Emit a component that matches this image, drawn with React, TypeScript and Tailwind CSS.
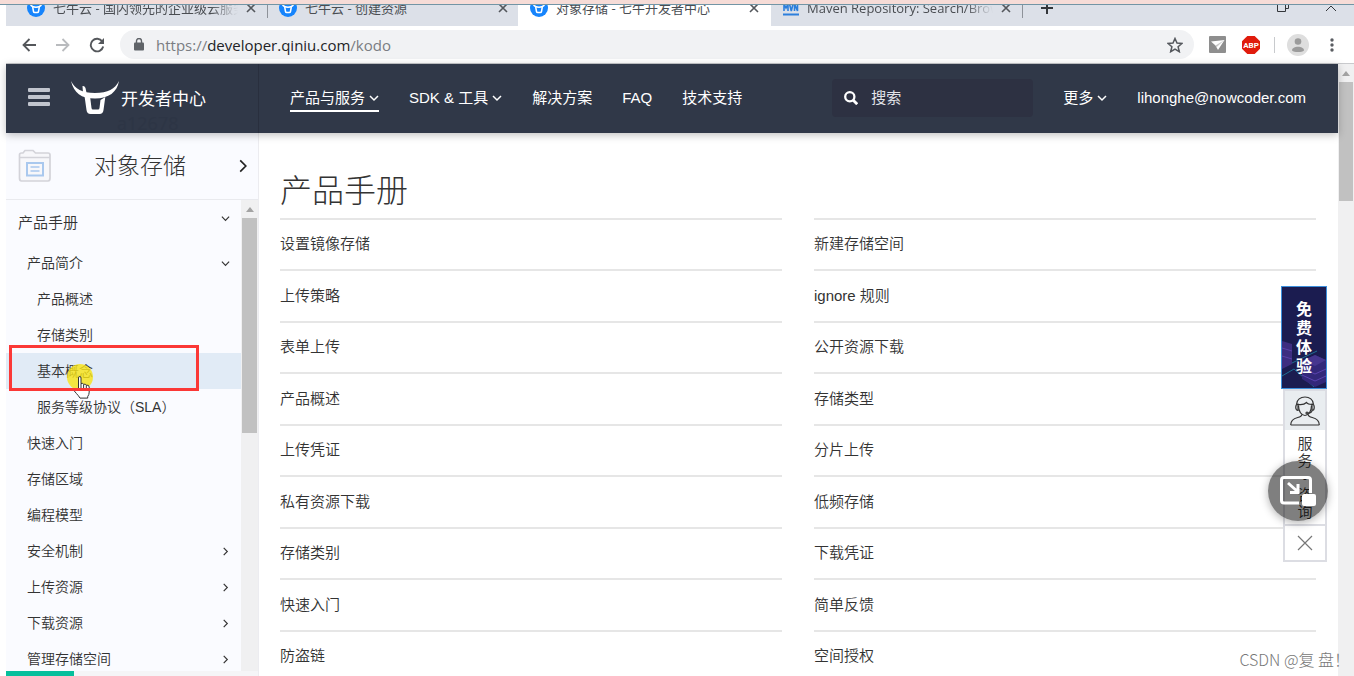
import type { ReactNode } from 'react';

type Tab = {
  title: string;
  icon: 'qiniu' | 'mvn';
  className: string;
  fade?: boolean;
  divider?: boolean;
};

type NavItem = {
  label: string;
  active?: boolean;
  menu?: boolean;
};

type MenuItem = {
  label: string;
  level: 1 | 2;
  state?: 'open' | 'closed';
  active?: boolean;
};

const tabs: Tab[] = [
  { title: '七牛云 - 国内领先的企业级云服务商', icon: 'qiniu', className: 'w-[262px] pl-[21px] pr-3 bg-[#dce0e8]', fade: true, divider: true },
  { title: '七牛云 - 创建资源', icon: 'qiniu', className: 'w-[250px] pl-[11px] pr-[10px] bg-[#dce0e8] rounded-br-lg' },
  { title: '对象存储 - 七牛开发者中心', icon: 'qiniu', className: 'w-[253px] pl-3 pr-3 bg-white' },
  { title: 'Maven Repository: Search/Browse', icon: 'mvn', className: 'w-[252px] pl-3 pr-3 bg-[#dce0e8] rounded-bl-lg', fade: true, divider: true },
];

const navItems: NavItem[] = [
  { label: '产品与服务', active: true, menu: true },
  { label: 'SDK & 工具', menu: true },
  { label: '解决方案' },
  { label: 'FAQ' },
  { label: '技术支持' },
];

const menuItems: MenuItem[] = [
  { label: '产品简介', level: 1, state: 'open' },
  { label: '产品概述', level: 2 },
  { label: '存储类别', level: 2 },
  { label: '基本概念', level: 2, active: true },
  { label: '服务等级协议（SLA）', level: 2 },
  { label: '快速入门', level: 1 },
  { label: '存储区域', level: 1 },
  { label: '编程模型', level: 1 },
  { label: '安全机制', level: 1, state: 'closed' },
  { label: '上传资源', level: 1, state: 'closed' },
  { label: '下载资源', level: 1, state: 'closed' },
  { label: '管理存储空间', level: 1, state: 'closed' },
];

const leftDocs = ['设置镜像存储', '上传策略', '表单上传', '产品概述', '上传凭证', '私有资源下载', '存储类别', '快速入门', '防盗链'];
const rightDocs = ['新建存储空间', 'ignore 规则', '公开资源下载', '存储类型', '分片上传', '低频存储', '下载凭证', '简单反馈', '空间授权'];

function Chevron({ dir, className }: { dir: 'down' | 'right'; className: string }) {
  return (
    <svg viewBox="0 0 10 10" className={className} fill="none" stroke="currentColor" aria-hidden="true">
      <path d={dir === 'down' ? 'M1 3l4 4 4-4' : 'M3 1l4 4-4 4'} />
    </svg>
  );
}

function QiniuIcon() {
  return (
    <svg viewBox="0 0 18 18" className="size-[18px] shrink-0" aria-hidden="true">
      <circle cx="9" cy="9" r="9" fill="#1684fc" />
      <path d="M3.5 5.500c1.500 3.600 9.500 3.600 11 0" fill="none" stroke="#fff" strokeWidth="1.500" />
      <path d="M5.700 8l.8 4.500q.2 1 1.200 1h2.600q1 0 1.200-1l.8-4.500" fill="none" stroke="#fff" strokeWidth="1.500" />
    </svg>
  );
}

function MvnIcon() {
  return (
    <svg viewBox="0 0 16 18" className="w-4 h-[18px] shrink-0" fill="none" stroke="#2d7fdc" aria-hidden="true">
      <path d="M1 12V5l2 4 2-4v7M6.500 5l1.800 7L10 5M11.500 12V5l3 7V5" strokeWidth="1.600" />
      <path d="M0 15.500h16" strokeWidth="2" />
    </svg>
  );
}

function BrowserTab({ tab }: { tab: Tab }) {
  return (
    <div className={`relative flex h-9 shrink-0 items-center ${tab.className}`}>
      {tab.icon === 'qiniu' ? <QiniuIcon /> : <MvnIcon />}
      <a
        href="#"
        className={`ml-2 min-w-0 flex-1 overflow-hidden whitespace-nowrap text-[13px] leading-5 text-[#4a4d52] ${
          tab.fade ? '[mask-image:linear-gradient(to_right,#000_85%,transparent)]' : ''
        }`}
      >
        {tab.title}
      </a>
      <button type="button" aria-label={`关闭 ${tab.title}`} className="ml-2 shrink-0 text-[#54575c]">
        <svg viewBox="0 0 10 10" className="size-[10px]" stroke="currentColor" strokeWidth="1.600">
          <path d="M1 1l8 8M9 1l-8 8" />
        </svg>
      </button>
      {tab.divider && <span className="absolute right-0 bottom-2 h-5 w-px bg-[#8e9299]" />}
    </div>
  );
}

function TabStrip() {
  return (
    <div className="ml-[6px] flex h-[21px] shrink-0 items-end overflow-hidden bg-[#dce0e8] font-['Open_Sans','Noto_Sans_CJK_SC',sans-serif]">
      {tabs.map((tab) => (
        <BrowserTab key={tab.title} tab={tab} />
      ))}
      <button type="button" aria-label="新标签页" className="mb-3 ml-[18px] text-[#33363a]">
        <svg viewBox="0 0 12 12" className="size-3" stroke="currentColor" strokeWidth="2">
          <path d="M6 0v12M0 6h12" />
        </svg>
      </button>
      <div className="mr-[17px] mb-[14px] ml-auto flex items-end gap-9 text-[#33363a]">
        <svg viewBox="0 0 12 12" className="size-3" fill="none" stroke="currentColor" aria-hidden="true">
          <path d="M.5 3.500h8v8h-8zM3 3V.500h8.500v8H9" />
        </svg>
        <svg viewBox="0 0 12 12" className="size-3" fill="none" stroke="currentColor" aria-hidden="true">
          <path d="M1 11l5-5 5 5" />
        </svg>
      </div>
    </div>
  );
}

function IconButton({ label, className, children }: { label: string; className: string; children: ReactNode }) {
  return (
    <button type="button" aria-label={label} className={`shrink-0 ${className}`}>
      {children}
    </button>
  );
}

function Toolbar() {
  return (
    <div className="ml-[6px] flex h-[38px] shrink-0 items-center border-b border-[#c9cacd] bg-white pr-4 pl-4">
      <IconButton label="后退" className="text-[#54575b]">
        <svg viewBox="0 0 14 14" className="size-[14px]" fill="none" stroke="currentColor" strokeWidth="1.800">
          <path d="M14 7H1.500M7.500 1l-6 6 6 6" />
        </svg>
      </IconButton>
      <IconButton label="前进" className="ml-5 text-[#b9bbbe]">
        <svg viewBox="0 0 14 14" className="size-[14px]" fill="none" stroke="currentColor" strokeWidth="1.800">
          <path d="M0 7h12.500M6.500 1l6 6-6 6" />
        </svg>
      </IconButton>
      <IconButton label="重新加载" className="ml-[19px] text-[#54575b]">
        <svg viewBox="0 0 16 16" className="size-4" fill="none" stroke="currentColor" strokeWidth="1.900">
          <path d="M13.300 4.500A6.300 6.300 0 1 0 14.200 9.500" />
          <path d="M15 1v6H9z" fill="currentColor" stroke="none" />
        </svg>
      </IconButton>
      <div className="ml-[15px] flex h-[29px] min-w-0 flex-1 items-center rounded-full bg-[#f1f2f4] pr-[11px] pl-[14px]">
        <svg viewBox="0 0 10 13" className="h-[13px] w-[10px] shrink-0" fill="#5f6368" aria-hidden="true">
          <rect y="4.500" width="10" height="8" rx="1" />
          <path d="M2.500 5V3a2.500 2.500 0 0 1 5 0v2" fill="none" stroke="#5f6368" strokeWidth="1.400" />
        </svg>
        <a href="#" className="ml-3 flex-1 font-['Open_Sans',sans-serif] text-[15px] leading-5 text-[#7a7d82]">
          https://<span className="text-[#222427]">developer.qiniu.com</span>/kodo
        </a>
        <IconButton label="收藏" className="text-[#55585d]">
          <svg viewBox="0 0 16 16" className="size-4" fill="none" stroke="currentColor" strokeWidth="1.500">
            <path d="M8 1.500l2 4.600 4.900.400-3.800 3.300 1.200 4.900L8 12.100l-4.300 2.600 1.200-4.900L1.100 6.500l4.900-.400z" />
          </svg>
        </IconButton>
      </div>
      <IconButton label="扩展" className="ml-[15px]">
        <svg viewBox="0 0 17 17" className="size-[17px]">
          <rect width="17" height="17" rx="1" fill="#8e8e8e" />
          <path d="M2 5.500l13.500-1.500L9 14l-2.500-4.500z" fill="#fff" />
          <path d="M6.500 9.500L15 4.300l-7.500 7z" fill="#c8c8c8" />
        </svg>
      </IconButton>
      <IconButton label="ABP" className="ml-4">
        <svg viewBox="0 0 18 18" className="size-[18px]">
          <path d="M5.300 0h7.400L18 5.300v7.400L12.700 18H5.300L0 12.700V5.300z" fill="#e01b0c" />
          <text x="9" y="12" textAnchor="middle" fontSize="8" fontWeight="700" fill="#fff" fontFamily="Roboto, sans-serif">
            ABP
          </text>
        </svg>
      </IconButton>
      <span className="ml-[14px] h-4 w-px bg-[#c8cacd]" />
      <IconButton label="用户" className="ml-3">
        <svg viewBox="0 0 22 22" className="size-[22px]">
          <circle cx="11" cy="11" r="11" fill="#dedede" />
          <circle cx="11" cy="7.500" r="3.300" fill="#9b9b9b" />
          <path d="M5 16.500c0-5 12-5 12 0-2 2-10 2-12 0z" fill="#9b9b9b" />
        </svg>
      </IconButton>
      <IconButton label="菜单" className="ml-[17px] text-[#5a5d62]">
        <svg viewBox="0 0 12 14" className="h-[14px] w-3" fill="currentColor">
          <circle cx="6" cy="2" r="1.700" />
          <circle cx="6" cy="7" r="1.700" />
          <circle cx="6" cy="12" r="1.700" />
        </svg>
      </IconButton>
    </div>
  );
}

function Logo() {
  return (
    <svg viewBox="0 0 48 33" className="h-[33px] w-12 shrink-0" fill="#fff" aria-hidden="true">
      <path d="M0 0C4 8 11 12 24 12S44 8 48 0C46 11 38 17.500 24 17.500S3 12 0 0z" />
      <path d="M11.500 5q2-.5 3 2l1.500 7-4-2z" />
      <path d="M13.500 15h5.500l1.500 12q.2 1.500 1.500 1.500h5q1.300 0 1.500-1.500l1-8 4.800-3-1.800 13q-.5 4-4 4h-9q-3.500 0-4-4z" />
    </svg>
  );
}

function Header() {
  return (
    <header className="relative z-10 flex h-[69px] shrink-0 items-stretch bg-[#303848] text-white shadow-[0_2px_8px_rgba(0,0,0,0.25)]">
      <div className="relative flex w-[253px] shrink-0 items-center border-r border-[#292f3e] pb-[3px] pl-[22px]">
        <button type="button" aria-label="导航菜单" className="flex flex-col gap-[3px]">
          <span className="h-1 w-[22px] rounded-[1px] bg-[#c1c5ce]" />
          <span className="h-1 w-[22px] rounded-[1px] bg-[#c1c5ce]" />
          <span className="h-1 w-[22px] rounded-[1px] bg-[#c1c5ce]" />
        </button>
        <a href="#" className="ml-[21px] flex items-end text-[17px] leading-7">
          <Logo />
          <span className="ml-[2px]">开发者中心</span>
        </a>
        <span className="absolute bottom-0 left-[111px] font-['Open_Sans',sans-serif] text-lg leading-5 text-[#2d3545]">a12678</span>
      </div>
      <nav className="flex items-center gap-[30px] pl-[31px] text-[15px] leading-6">
        {navItems.map((item) => (
          <a
            key={item.label}
            href="#"
            className={`flex items-center gap-1 border-b-2 whitespace-nowrap ${item.active ? 'border-white' : 'border-transparent'}`}
          >
            {item.label}
            {item.menu && <Chevron dir="down" className="size-[10px] stroke-[1.500]" />}
          </a>
        ))}
      </nav>
      <div className="ml-auto flex items-center pr-8 pb-[2px] text-[15px] leading-6">
        <label className="flex h-[38px] w-[201px] items-center gap-[13px] rounded-[4px] bg-[#2d3142] pl-3">
          <svg viewBox="0 0 14 14" className="size-[14px] shrink-0" fill="none" stroke="#fff" aria-hidden="true">
            <circle cx="5.800" cy="5.800" r="4.600" strokeWidth="2.300" />
            <path d="M9 9l4.200 4.200" strokeWidth="2.800" />
          </svg>
          <input
            type="search"
            aria-label="搜索"
            placeholder="搜索"
            className="w-full min-w-0 bg-transparent outline-none placeholder:text-[#e2e4e9]"
          />
        </label>
        <a href="#" className="ml-[30px] flex items-center gap-1 whitespace-nowrap">
          更多
          <Chevron dir="down" className="size-[10px] stroke-[1.500]" />
        </a>
        <a href="#" className="ml-[30px] whitespace-nowrap">
          lihonghe@nowcoder.com
        </a>
      </div>
    </header>
  );
}

function Sidebar() {
  return (
    <aside className="relative flex w-[253px] shrink-0 flex-col border-r border-[#ececf0] bg-[#fafbff]">
      <div className="flex h-[67px] shrink-0 items-center border-b border-[#e9eaee] pr-2 pl-3">
        <svg viewBox="0 0 34 34" className="size-[34px] shrink-0" fill="none" aria-hidden="true">
          <path d="M1.500 29V6q0-2 2-2H5l2-2.500h8L17.500 4H30q2 0 2 2v23q0 3-2 3H3.500q-2 0-2-3z" fill="#f7f7fa" stroke="#d3d3d9" strokeWidth="1.700" />
          <path d="M2 8.500h30" stroke="#d3d3d9" strokeWidth="1.500" />
          <rect x="9" y="14" width="16" height="12.500" stroke="#a9c8ee" strokeWidth="2" />
          <path d="M12.500 18h9M12.500 22h9" stroke="#a9c8ee" strokeWidth="1.500" />
        </svg>
        <h2 className="flex-1 pr-2 text-center text-[23px] leading-8 font-light text-[#333]">对象存储</h2>
        <Chevron dir="right" className="size-[14px] text-[#222] stroke-[1.200]" />
      </div>
      <div className="flex min-h-0 flex-1">
        <nav className="min-w-0 flex-1 overflow-hidden text-sm font-[350] text-[#333]">
          <a href="#" className="flex h-[45px] items-center justify-between pr-[11px] pl-3 text-[15px]">
            产品手册
            <Chevron dir="down" className="mb-2 size-[9px] stroke-[1.300]" />
          </a>
          {menuItems.map((item) => (
            <a
              key={item.label}
              href="#"
              className={`flex h-9 items-center justify-between pr-[11px] whitespace-nowrap ${item.level === 1 ? 'pl-[21px]' : 'pl-[31px]'} ${
                item.active ? 'bg-[#e1ebf6]' : ''
              }`}
            >
              {item.label}
              {item.state && (
                <Chevron dir={item.state === 'open' ? 'down' : 'right'} className="size-[9px] stroke-[1.300]" />
              )}
            </a>
          ))}
        </nav>
        <div className="flex w-[17px] shrink-0 flex-col items-center bg-[#f0f0f1]" aria-hidden="true">
          <svg viewBox="0 0 8 5" className="mt-[7px] mb-[6px] h-[5px] w-2 shrink-0" fill="#a3a3a3">
            <path d="M4 0l4 5H0z" />
          </svg>
          <div className="h-[215px] w-[15px] shrink-0 bg-[#c1c1c1]" />
        </div>
      </div>

      {/* callout around the current entry, with the pointer on it */}
      <svg viewBox="0 0 28 36" className="absolute top-[231px] left-[60px] h-9 w-7" aria-hidden="true">
        <circle cx="14" cy="13" r="13" fill="#f9e414" fillOpacity="0.800" />
        <path
          d="M12.500 25V14q0-1.500 1.300-1.500T15 14v5.500q2-.8 2.500.800 2-.600 2.800.800 2.900-.400 2.900 2v5q0 2.500-1.500 4.500v1.500H14q-1.500-2.500-3.500-4.500L7.500 26q0-2.500 2.500-1.200z"
          fill="#fff"
          stroke="#333"
        />
        <path d="M15 19.500V24M17.600 20.500V24M20.300 21.200V24.500" stroke="#333" fill="none" />
      </svg>
      <div className="absolute top-[212px] left-[3px] h-[46px] w-[190px] border-3 border-[#fb3836]" />
      <div className="absolute bottom-0 left-0 h-[5px] w-full bg-[#f5f5f7]">
        <div className="h-full w-[68px] bg-[#06bf9c]" />
      </div>
    </aside>
  );
}

function DocList({ items }: { items: string[] }) {
  return (
    <ul className="min-w-0 flex-1 text-[15px] font-[350] text-[#333]">
      {items.map((item) => (
        <li key={item} className="flex items-center border-t-2 border-[#e6e6e6] odd:h-[51px] even:h-[52px]">
          <a href="#">{item}</a>
        </li>
      ))}
    </ul>
  );
}

function ServicePanel() {
  return (
    <div className="absolute top-[286px] right-[27px] flex w-[46px] flex-col items-end">
      <a
        href="#"
        className="relative flex h-[103px] w-full justify-center overflow-hidden border border-[#3c8fdc] bg-[#1b1c50] pt-[13px] text-base leading-[19px] font-bold text-white"
      >
        <svg viewBox="0 0 44 101" className="absolute inset-0 size-full" aria-hidden="true">
          <path d="M0 54l10 3v20L0 82z" fill="#3d2d80" />
          <path d="M0 61l10 3M0 69l10 3" stroke="#5c42a8" />
          <path d="M0 89l12-7 20 18M10 76l25-12" stroke="#1f6f92" fill="none" />
          <path d="M20 74l13-6 11 5v22l-11 5-13-8z" fill="#33287a" />
          <path d="M20 74l13-6 11 5-11 6z" fill="#46368f" />
          <path d="M20 81l13 6 11-5M20 88l13 6 11-5" stroke="#5a43ae" fill="none" />
        </svg>
        <span className="relative w-4 text-center">免费体验</span>
      </a>
      <div className="flex w-11 flex-col items-center border-2 border-[#dcdde3] bg-white">
        <div className="flex h-[39px] w-full items-center justify-center bg-[#e9edf0]">
          <svg viewBox="0 0 30 30" className="size-[30px]" fill="none" stroke="#333" strokeWidth="1.200" aria-hidden="true">
            <path d="M.7 29c0-5 3-6.500 7-7.500 3-.7 4-1.200 4-3M29.300 29c0-5-3-6.500-7-7.500-3-.7-4-1.200-4-3M.7 29h28.600" />
            <path d="M8.500 9.500c0 6 3 10 6.500 10s6.500-4 6.500-10" />
            <path d="M8 8.500c3 .500 7-.500 8.500-2 1 1.500 3 2 5.500 2M6.500 8.500C6.500-1.500 23.500-1.500 23.500 8.500" />
            <path d="M8 8v6.500c-3 0-3-6.500 0-6.500zM22 8v6.500c3 0 3-6.500 0-6.500zM22 14.500c0 2-2 2.500-4 2.500" />
            <circle cx="17" cy="17" r="1" />
          </svg>
        </div>
        <a href="#" className="flex h-[94px] flex-col justify-center text-center text-[15px] leading-[17px] font-[350] text-[#333]">
          {['服', '务', '•', '咨', '询'].map((char) => (
            <span key={char}>{char}</span>
          ))}
        </a>
        <button type="button" aria-label="关闭" className="flex h-9 w-full items-center justify-center border-t-2 border-[#dcdde3]">
          <svg viewBox="0 0 16 16" className="size-4" stroke="#777" strokeWidth="1.200">
            <path d="M1 1l14 14M15 1L1 15" />
          </svg>
        </button>
      </div>
      <button
        type="button"
        aria-label="画中画"
        className="absolute top-[175px] right-[-1px] flex size-[60px] items-center justify-center rounded-full bg-black/50 shadow-[0_2px_8px_rgba(0,0,0,0.3)]"
      >
        <svg viewBox="0 0 36 30" className="h-[30px] w-9" fill="none" stroke="#fff" strokeWidth="3">
          <path d="M19 27H4q-2.500 0-2.500-2.500V4Q1.500 1.500 4 1.500h24q2.500 0 2.500 2.500v13" />
          <path d="M8 7l9 8M18 8v8.500H10" />
          <rect x="22" y="18" width="14" height="12" rx="2" fill="#fff" stroke="none" />
        </svg>
      </button>
    </div>
  );
}

export default function App() {
  return (
    <div className="relative flex h-screen flex-col overflow-hidden bg-white font-['Liberation_Sans','Noto_Sans_CJK_SC',sans-serif]">
      <div className="h-[5px] shrink-0 border-b border-[#7295a5] bg-[#f6dcd7]" />
      <TabStrip />
      <Toolbar />
      <div className="ml-[6px] flex min-h-0 flex-1">
        <div className="flex min-w-0 flex-1 flex-col">
          <Header />
          <div className="flex min-h-0 flex-1">
            <Sidebar />
            <main className="min-w-0 flex-1 overflow-hidden pt-[34px] pr-[22px] pl-[21px]">
              <h1 className="text-[32px] leading-[48px] font-light text-[#333]">产品手册</h1>
              <div className="mt-[3px] flex gap-8">
                <DocList items={leftDocs} />
                <DocList items={rightDocs} />
              </div>
            </main>
          </div>
        </div>
        <div className="flex w-4 shrink-0 flex-col items-center bg-[#f0f0f1]" aria-hidden="true">
          <svg viewBox="0 0 8 5" className="mt-[7px] mb-[6px] h-[5px] w-2 shrink-0" fill="#a3a3a3">
            <path d="M4 0l4 5H0z" />
          </svg>
          <div className="h-[119px] w-[14px] shrink-0 bg-[#c1c1c1]" />
        </div>
      </div>
      <ServicePanel />
      <p className="absolute right-1 bottom-[5px] font-['Noto_Sans_CJK_SC',sans-serif] text-base leading-6 font-light text-[#777]">
        CSDN @复 盘！
      </p>
    </div>
  );
}
